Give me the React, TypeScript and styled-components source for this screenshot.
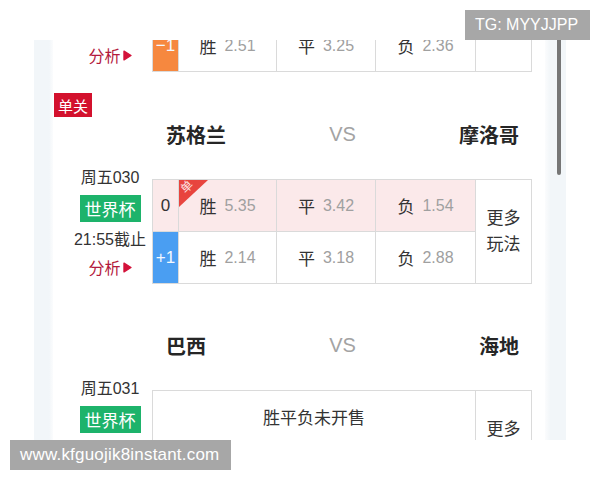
import styled, { createGlobalStyle } from "styled-components";

const GlobalStyle = createGlobalStyle`
  html, body {
    margin: 0;
    padding: 0;
    background: #ffffff;
  }
  body {
    font-family: "Liberation Sans", "Noto Sans CJK SC", sans-serif;
    color: #333333;
  }
  * {
    box-sizing: border-box;
  }
`;

const Page = styled.div`
  position: relative;
  width: 600px;
  height: 480px;
  padding: 40px 34px;
  background: #ffffff;
`;

const Phone = styled.div`
  display: flex;
  width: 532px;
  height: 400px;
  overflow: hidden;
`;

const Gutter = styled.div`
  width: 19px;
  flex-shrink: 0;
  background: linear-gradient(90deg, #f2f6f9 80%, #fbfcfd);
`;

const Rail = styled.div`
  display: flex;
  width: 21px;
  flex-shrink: 0;
  background: linear-gradient(90deg, #fbfcfd, #f2f6f9 25%);
`;

const Thumb = styled.div`
  width: 4px;
  height: 135px;
  margin-left: 12px;
  border-radius: 0 0 2px 2px;
  background: #767676;
`;

const Card = styled.div`
  flex: 1;
  overflow: hidden;
  padding: 0 13px 0 15px;
  background: #ffffff;
`;

const Feed = styled.div`
  margin-top: -179px;
`;

const MatchBlock = styled.section<{ $top: number }>`
  padding-top: ${(p) => p.$top}px;
`;

const SingleTag = styled.div`
  display: inline-flex;
  align-items: center;
  justify-content: center;
  width: 38px;
  height: 24px;
  margin-left: -14px;
  background: #d3112d;
  color: #ffffff;
  font-size: 15px;
`;

const TeamsRow = styled.div`
  display: flex;
  align-items: center;
  justify-content: space-between;
  height: 36px;
  padding: 0 13px 2px 98px;
`;

const TeamName = styled.div`
  font-size: 20px;
  font-weight: bold;
  color: #262626;
`;

const Versus = styled.div`
  font-size: 20px;
  color: #a3a3a3;
`;

const Body = styled.div`
  display: flex;
  align-items: flex-start;
  margin-top: 26px;
`;

const Info = styled.div`
  display: flex;
  flex-direction: column;
  align-items: center;
  gap: 7px;
  width: 84px;
  margin-top: -11px;
  flex-shrink: 0;
`;

const InfoLine = styled.div`
  height: 20px;
  line-height: 20px;
  font-size: 16px;
  color: #333333;
  white-space: nowrap;
`;

const LeagueTag = styled.div`
  display: flex;
  align-items: center;
  justify-content: center;
  width: 61px;
  height: 27px;
  margin-bottom: 1px;
  background: #1db36b;
  color: #ffffff;
  font-size: 17px;
`;

const Analysis = styled.div`
  display: flex;
  align-items: center;
  gap: 2px;
  height: 20px;
  font-size: 16px;
  color: #b31a3d;
`;

const Board = styled.div`
  display: grid;
  grid-template-columns: 25px 97px 98px 99px 55px;
  grid-template-rows: 51px 51px;
  gap: 1px;
  width: 380px;
  padding: 1px;
  background: #dadada;
`;

const HcapCell = styled.div<{ $tone: "plain" | "blue" | "orange" }>`
  display: flex;
  align-items: center;
  justify-content: center;
  font-size: 17px;
  background: ${(p) =>
    p.$tone === "blue" ? "#4a9ef2" : p.$tone === "orange" ? "#f6883f" : "#fbe9ea"};
  color: ${(p) => (p.$tone === "plain" ? "#333333" : "#f4f8ff")};
`;

const OddsCell = styled.div<{ $hot?: boolean }>`
  position: relative;
  display: flex;
  align-items: center;
  justify-content: center;
  gap: 8px;
  background: ${(p) => (p.$hot ? "#fbe9ea" : "#ffffff")};
`;

const Pick = styled.span`
  font-size: 17px;
  color: #333333;
`;

const Odds = styled.span`
  font-size: 16px;
  color: #a0a0a0;
`;

const MoreCell = styled.div`
  grid-column: 5;
  grid-row: 1 / span 2;
  display: flex;
  align-items: center;
  justify-content: center;
  padding-top: 1px;
  background: #ffffff;
  font-size: 17px;
  line-height: 26px;
  text-align: center;
  color: #333333;
`;

const ClosedCell = styled.div`
  grid-column: 1 / span 4;
  display: flex;
  align-items: center;
  justify-content: center;
  background: #ffffff;
  font-size: 17px;
  color: #333333;
`;

const Corner = styled.div`
  position: absolute;
  top: 0;
  left: 0;
  width: 29px;
  height: 27px;
  background: #e8453f;
  clip-path: polygon(0 0, 100% 0, 0 100%);
`;

const CornerText = styled.span`
  position: absolute;
  top: 0;
  left: 2px;
  font-size: 12px;
  line-height: 14px;
  color: #ffffff;
  opacity: 0.85;
  transform: rotate(-45deg);
`;

const Mark = styled.div`
  position: absolute;
  display: flex;
  align-items: center;
  height: 30px;
  background: #a7a7a7;
  color: #ffffff;
`;

const TgMark = styled(Mark)`
  top: 10px;
  right: 10px;
  width: 125px;
  padding-left: 10px;
  font-size: 16px;
`;

const SiteMark = styled(Mark)`
  left: 10px;
  bottom: 10px;
  width: 221px;
  padding-left: 10px;
  font-size: 17px;
  letter-spacing: 0.2px;
`;

type Hcap = { value: string; tone: "plain" | "blue" | "orange" };

type OddsRow = {
  hcap: Hcap;
  odds: [string, string, string];
  hot?: boolean;
  single?: boolean;
};

type Match = {
  home: string;
  away: string;
  issue: string;
  league: string;
  deadline: string;
  single?: boolean;
  rows?: OddsRow[];
  top: number;
};

const matches: Match[] = [
  {
    home: "阿根廷",
    away: "墨西哥",
    issue: "周五029",
    league: "世界杯",
    deadline: "21:55截止",
    top: 44,
    rows: [
      { hcap: { value: "0", tone: "plain" }, odds: ["1.62", "3.40", "4.60"] },
      { hcap: { value: "−1", tone: "orange" }, odds: ["2.51", "3.25", "2.36"] },
    ],
  },
  {
    home: "苏格兰",
    away: "摩洛哥",
    issue: "周五030",
    league: "世界杯",
    deadline: "21:55截止",
    single: true,
    top: 21,
    rows: [
      {
        hcap: { value: "0", tone: "plain" },
        odds: ["5.35", "3.42", "1.54"],
        hot: true,
        single: true,
      },
      { hcap: { value: "+1", tone: "blue" }, odds: ["2.14", "3.18", "2.88"] },
    ],
  },
  {
    home: "巴西",
    away: "海地",
    issue: "周五031",
    league: "世界杯",
    deadline: "21:55截止",
    top: 44,
  },
];

const picks = ["胜", "平", "负"];

function PlayArrow() {
  return (
    <svg width="9" height="11" viewBox="0 0 9 11">
      <path d="M1 1.2 L8 5.5 L1 9.8 Z" fill="#d3123a" stroke="#d3123a" strokeWidth="1.4" strokeLinejoin="round" />
    </svg>
  );
}

function MatchCard({ match }: { match: Match }) {
  return (
    <MatchBlock $top={match.top}>
      {match.single && <SingleTag>单关</SingleTag>}
      <TeamsRow>
        <TeamName>{match.home}</TeamName>
        <Versus>VS</Versus>
        <TeamName>{match.away}</TeamName>
      </TeamsRow>
      <Body>
        <Info>
          <InfoLine>{match.issue}</InfoLine>
          <LeagueTag>{match.league}</LeagueTag>
          <InfoLine>{match.deadline}</InfoLine>
          <Analysis>
            分析
            <PlayArrow />
          </Analysis>
        </Info>
        <Board>
          {match.rows ? (
            match.rows.map((row, i) => [
              <HcapCell key={`h${i}`} $tone={row.hcap.tone}>
                {row.hcap.value}
              </HcapCell>,
              ...row.odds.map((odd, j) => (
                <OddsCell key={`o${i}${j}`} $hot={row.hot}>
                  {row.single && j === 0 && (
                    <Corner>
                      <CornerText>单</CornerText>
                    </Corner>
                  )}
                  <Pick>{picks[j]}</Pick>
                  <Odds>{odd}</Odds>
                </OddsCell>
              )),
            ])
          ) : (
            <>
              <ClosedCell>胜平负未开售</ClosedCell>
              <ClosedCell>让球胜平负未开售</ClosedCell>
            </>
          )}
          <MoreCell>
            更多
            <br />
            玩法
          </MoreCell>
        </Board>
      </Body>
    </MatchBlock>
  );
}

export default function App() {
  return (
    <>
      <GlobalStyle />
      <Page>
        <Phone>
          <Gutter />
          <Card>
            <Feed>
              {matches.map((m) => (
                <MatchCard key={m.issue} match={m} />
              ))}
            </Feed>
          </Card>
          <Rail>
            <Thumb />
          </Rail>
        </Phone>
        <TgMark>TG: MYYJJPP</TgMark>
        <SiteMark>www.kfguojik8instant.com</SiteMark>
      </Page>
    </>
  );
}
